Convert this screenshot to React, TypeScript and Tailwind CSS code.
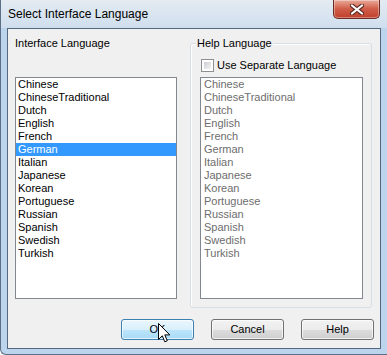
import React from 'react';

const languages = [
  'Chinese',
  'ChineseTraditional',
  'Dutch',
  'English',
  'French',
  'German',
  'Italian',
  'Japanese',
  'Korean',
  'Portuguese',
  'Russian',
  'Spanish',
  'Swedish',
  'Turkish',
];

function CloseButton() {
  return (
    <div className="mr-[7px] w-[47px] h-[19px] rounded-b-[5px] border border-t-0 border-[#6b2a22] bg-gradient-to-b from-[#e9a99a] via-[#cf5c48] to-[#c0402c] shadow-[inset_0_0_0_1px_rgba(255,255,255,0.35)] flex items-center justify-center">
      <svg width="14" height="11" viewBox="0 0 14 11">
        <path d="M2 1.5 L12 9.5 M12 1.5 L2 9.5" stroke="#5a2a24" strokeWidth="4.2" strokeLinecap="round" />
        <path d="M2 1.5 L12 9.5 M12 1.5 L2 9.5" stroke="#ffffff" strokeWidth="2.2" strokeLinecap="round" />
      </svg>
    </div>
  );
}

function ListBox({ selected, disabled, width }: { selected?: string; disabled?: boolean; width: string }) {
  return (
    <div className={`${width} h-[222px] border border-[#828790] bg-white`}>
      {languages.map((lang) => {
        const isSel = lang === selected;
        return (
          <div
            key={lang}
            className={
              'h-[13px] leading-[13px] text-[11px] ' +
              (disabled ? 'pl-[3px] text-[#6d6d6d]' : 'pl-[2px] ') +
              (isSel ? 'bg-[#3399ff] text-white' : disabled ? '' : 'text-black')
            }
          >
            {lang}
          </div>
        );
      })}
    </div>
  );
}

function Button({ label, focused }: { label: string; focused?: boolean }) {
  return (
    <div
      className={
        'w-[73px] h-[21px] rounded-[3px] border flex items-center justify-center text-[11px] text-black shadow-[inset_0_0_0_1px_rgba(255,255,255,0.7)] ' +
        (focused
          ? 'border-[#3c7fb1] bg-[linear-gradient(to_bottom,#eaf6fd_0%,#d9f0fc_50%,#bee6fd_50%,#a7d9f5_100%)]'
          : 'border-[#707070] bg-[linear-gradient(to_bottom,#f2f2f2_0%,#ebebeb_50%,#dddddd_50%,#cfcfcf_100%)]')
      }
    >
      {label}
    </div>
  );
}

export default function App() {
  return (
    <div className="relative w-[387px] h-[355px] overflow-hidden flex flex-col bg-[#bcd4ec] border-l border-b border-[#5b6f86] rounded-bl-[6px] font-['Liberation_Sans',Arial,sans-serif]">
      {/* blurred glass behind title */}
      <div className="absolute left-[120px] top-[-4px] w-[160px] h-[10px] bg-[#7f95b4] opacity-50 blur-[4px] rounded-full" />
      <div className="absolute left-[150px] top-[18px] w-[120px] h-[9px] bg-[#7f95b4] opacity-50 blur-[4px] rounded-full" />

      <div className="relative h-[28px] flex justify-between bg-gradient-to-b from-[#e4ebf2] to-[#cfdeee]">
        <span className="pl-[7px] pt-[6px] text-[12px] leading-[16px] text-black">Select Interface Language</span>
        <CloseButton />
      </div>

      <div className="relative mx-[6px] h-[321px] border border-[#54687f] bg-[#f0f0f0] flex flex-col">
        <div className="flex px-[7px]">
          <div className="w-[162px] flex flex-col">
            <div className="mt-[8px] h-[13px] leading-[13px] text-[11px] text-black">Interface Language</div>
            <div className="mt-[27px]">
              <ListBox selected="German" width="w-[162px]" />
            </div>
          </div>

          <div className="relative ml-[13px] mt-[14px] w-[182px] h-[265px] rounded-[3px] border border-[#d5dfe5] shadow-[inset_1px_1px_0_#ffffff] flex flex-col pl-[9px]">
            <span className="absolute left-[5px] top-[-7px] px-[1px] bg-[#f0f0f0] h-[13px] leading-[13px] text-[11px] text-black">
              Help Language
            </span>
            <div className="mt-[15px] flex items-center h-[13px] pl-[1px]">
              <div className="w-[13px] h-[13px] border border-[#8f8f8f] bg-white p-[2px]">
                <div className="w-full h-full bg-gradient-to-br from-[#cbcfd5] to-[#f4f4f4]" />
              </div>
              <span className="ml-[3px] text-[11px] leading-[13px] text-black">Use Separate Language</span>
            </div>
            <div className="mt-[5px]">
              <ListBox disabled width="w-[163px]" />
            </div>
          </div>
        </div>

        <div className="mt-[11px] flex justify-end gap-[17px] pr-[6px]">
          <Button label="OK" focused />
          <Button label="Cancel" />
          <Button label="Help" />
        </div>
      </div>

      {/* mouse pointer */}
      <svg className="absolute left-[157px] top-[323px]" width="13" height="20" viewBox="0 0 13 20">
        <path
          d="M0.5 0.5 L0.5 16.5 L4.3 12.8 L6.8 18.8 L9.3 17.8 L6.8 11.9 L11.8 11.9 Z"
          fill="#ffffff"
          stroke="#000000"
          strokeWidth="1"
          strokeLinejoin="round"
        />
      </svg>
    </div>
  );
}
